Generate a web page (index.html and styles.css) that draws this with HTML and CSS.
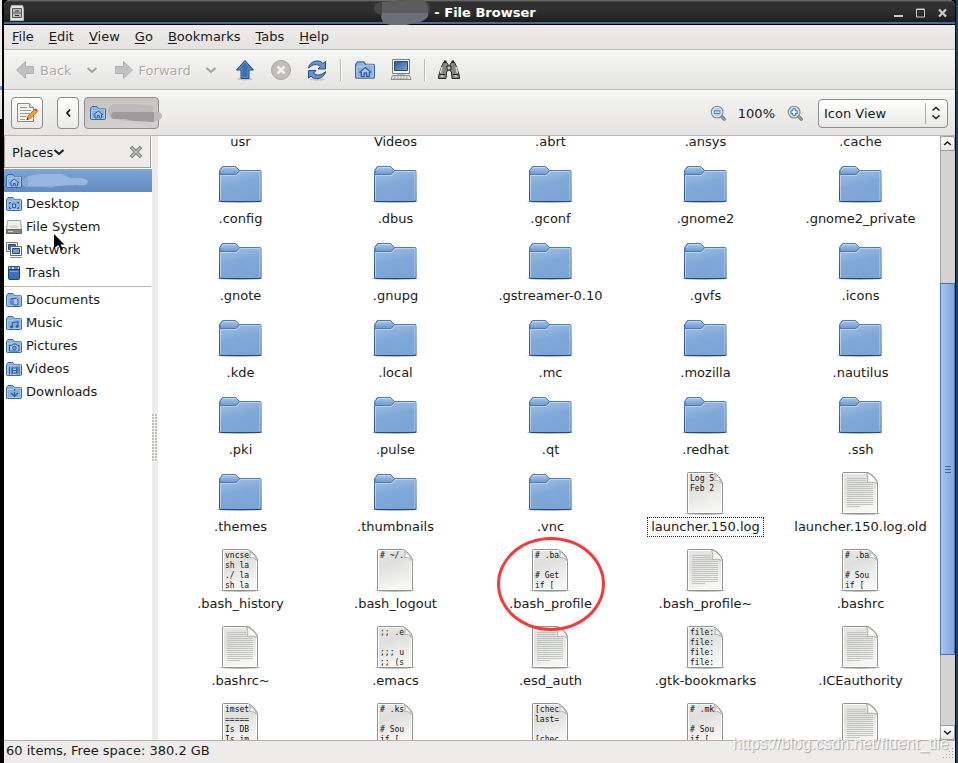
FILE: index.html
```html
<!DOCTYPE html>
<html lang="en">
<head>
    <meta charset="UTF-8">
    <meta name="viewport" content="width=device-width, initial-scale=1.0">
    <title>File Browser</title>
    <link rel="stylesheet" href="styles.css">
</head>
<body>
<!-- shared icons -->
<svg class="defs" width="0" height="0" aria-hidden="true">
    <defs>
        <linearGradient id="gFolder" x1="0" y1="0" x2="0.3" y2="1">
            <stop offset="0" stop-color="#a9c5e6"/>
            <stop offset="0.6" stop-color="#80a9d8"/>
            <stop offset="1" stop-color="#7ba5d5"/>
        </linearGradient>
        <linearGradient id="gTab" x1="0" y1="0" x2="0" y2="1">
            <stop offset="0" stop-color="#acc8ea"/>
            <stop offset="1" stop-color="#6a98ce"/>
        </linearGradient>
        <linearGradient id="gEdge" x1="0" y1="0" x2="0" y2="1">
            <stop offset="0" stop-color="#5583be"/>
            <stop offset="1" stop-color="#204a87"/>
        </linearGradient>
        <linearGradient id="gPaper" x1="0" y1="0" x2="0.3" y2="1">
            <stop offset="0" stop-color="#e8e9e6"/>
            <stop offset="0.4" stop-color="#dfe0dd"/>
            <stop offset="1" stop-color="#f6f6f5"/>
        </linearGradient>
        <linearGradient id="gBlue" x1="0" y1="0" x2="1" y2="1">
            <stop offset="0" stop-color="#2c5a9c"/>
            <stop offset="1" stop-color="#7ba5d8"/>
        </linearGradient>
    </defs>
    <symbol id="folder" viewBox="0 0 48 48">
        <ellipse cx="24" cy="40.500" rx="23" ry="1.500" fill="#000" opacity=".3"/>
        <path d="M3.500 39.500V9.500l3-4h13l3.500 4h21a1 1 0 0 1 1 1v29a1 1 0 0 1-1 1h-39.500a1 1 0 0 1-1-1z" fill="url(#gFolder)" stroke="url(#gEdge)"/>
        <path d="M4 13.500V9.500l3-4h12.500l4 4-3.500 4z" fill="url(#gTab)" stroke="#4c7ab6"/>
        <path d="M4.500 39V14.500h16.500l3.500-4h19.500V39" fill="none" stroke="#c3d8f0" opacity=".8"/>
        <path d="M5 9.500l2.500-3h11.500" fill="none" stroke="#d0e1f5" opacity=".7"/>
    </symbol>
    <symbol id="paper" viewBox="0 0 48 48">
        <ellipse cx="24" cy="44.500" rx="20" ry="1.500" fill="#000" opacity=".28"/>
        <path d="M6.500 43.500v-39a1 1 0 0 1 1-1H31c3.500 0 10.500 7 10.500 11v29a1 1 0 0 1-1 1h-33a1 1 0 0 1-1-1z" fill="url(#gPaper)" stroke="#91938e"/>
        <path d="M7.500 43.500v-39H31c3 0 9.500 7 9.500 10.500v28.500z" fill="none" stroke="#fff"/>
    </symbol>
    <symbol id="curl" viewBox="0 0 48 48">
        <path d="M33.500 5.500c1 1.500 1 3.500 0 6 3-.5 5.500.5 7 3-.5-3.500-3.500-7-7-9z" fill="#fbfbfb" stroke="#a2a49f" stroke-width=".8"/>
    </symbol>
    <symbol id="text-file" viewBox="0 0 48 48">
        <use href="#paper"/>
        <path d="M11 9.500h19M11 11.500h19M11 13.500h20M11 15.500h26M11 17.500h26M11 19.500h26M11 21.500h26M11 23.500h26M11 25.500h26M11 27.500h26M11 29.500h26M11 31.500h26M11 33.500h26M11 35.500h26M11 37.500h13" stroke="#c3c5c1"/>
        <path d="M30.500 4c1.500 3 1.500 6 1 9.500 4-.5 8-.5 10 2C41 11 35.500 5 30.500 4z" fill="#f9f9f8" stroke="#9b9d98" stroke-width=".8"/>
    </symbol>
    <symbol id="folder-small" viewBox="0 0 16 16">
        <path d="M.5 14V3.500l1.500-2h5l1.500 2h6a1 1 0 0 1 1 1V14a1 1 0 0 1-1 .5h-13a1 1 0 0 1-1-.5z" fill="#8fb4df" stroke="#386aa9"/>
        <path d="M1.500 13.500v-8H7l2-1.500h5.500v9.500z" fill="#8db1dd" stroke="#b9d1ed" stroke-width=".7"/>
    </symbol>
    <symbol id="home" viewBox="0 0 16 16">
        <use href="#folder-small"/>
        <path d="M3.500 10 8.200 6l4.800 4M5 9.500v3.500h2.300v-2.500h2V13h2.200V9.500" fill="#a9c6e8" stroke="#2b5ea0"/>
    </symbol>
    <symbol id="chevron" viewBox="0 0 12 12">
        <path d="M1.500 4L6 8l4.500-4" fill="none" stroke="currentColor" stroke-width="2"/>
    </symbol>
    <symbol id="lens" viewBox="0 0 18 18">
        <path d="M12 12l4 4" stroke="#6b6d69" stroke-width="3.500" stroke-linecap="round"/>
        <path d="M12 12l4 4" stroke="#a9aba7" stroke-width="1.500" stroke-linecap="round"/>
        <circle cx="8" cy="8" r="6.500" fill="#b5d0f1" stroke="#8b8d89" stroke-width="1.500"/>
        <circle cx="8" cy="8" r="5.300" fill="none" stroke="#e8f1fb"/>
    </symbol>
</svg>

<div class="window">
    <header class="titlebar">
        <svg class="app-icon" width="14" height="16" viewBox="0 0 14 16" aria-hidden="true">
            <path d="M1.500.5h11l1 3v12H.5v-12z" fill="#e4e4e1" stroke="#b3b5b0"/>
            <path d="M2.500 3.500h9v9h-9zM2.500 8h9" fill="#b9bbb6" stroke="#555753"/>
            <path d="M5 6h4M5 10.500h4" stroke="#2e3436"/>
        </svg>
        <h1>
            <svg class="smudge" width="56" height="25" viewBox="0 0 56 25" aria-hidden="true">
                <path d="M0 8Q0 2 8 2l24-2h16q8 2 8 8t-4 7H10Q0 14 0 8z" fill="#454546"/>
                <path d="M8 2l24-2h18q5 4 4 14H8z" fill="#5c5c5d"/>
                <path d="M8 13h46q1 5-4 7-4 3-11 3-6 3-14 2-12 1-16-3-3-4-1-9z" fill="#6b6e76"/>
            </svg>
            <span>- File Browser</span>
        </h1>
        <div class="window-controls">
            <button type="button" aria-label="Minimize"><svg width="9" height="11"><path d="M0 9h9" stroke="#ccc" stroke-width="2"/></svg></button>
            <button type="button" aria-label="Maximize"><svg width="9" height="11"><path d="M.5 2h8v8h-8zM0 2.500h9" fill="none" stroke="#ccc"/></svg></button>
            <button type="button" aria-label="Close"><svg width="9" height="11"><path d="M1 2.500l7 7m0-7l-7 7" stroke="#ccc" stroke-width="2.300"/></svg></button>
        </div>
    </header>

    <nav class="menubar">
        <a href="#"><u>F</u>ile</a>
        <a href="#"><u>E</u>dit</a>
        <a href="#"><u>V</u>iew</a>
        <a href="#"><u>G</u>o</a>
        <a href="#"><u>B</u>ookmarks</a>
        <a href="#"><u>T</u>abs</a>
        <a href="#"><u>H</u>elp</a>
    </nav>

    <div class="toolbar">
        <button type="button" class="nav" disabled>
            <svg width="20" height="20" viewBox="0 0 20 20"><path d="M10.500 1.500v5h8v7h-8v5L1.500 10z" fill="#bfc1c2" stroke="#b0b2b3"/></svg>
            Back
        </button>
        <button type="button" class="drop" disabled aria-label="Back history"><svg width="12" height="12"><use href="#chevron"/></svg></button>
        <button type="button" class="nav" disabled>
            <svg width="20" height="20" viewBox="0 0 20 20"><path d="M9.500 1.500v5h-8v7h8v5l9-8.500z" fill="#bfc1c2" stroke="#b0b2b3"/></svg>
            Forward
        </button>
        <button type="button" class="drop" disabled aria-label="Forward history"><svg width="12" height="12"><use href="#chevron"/></svg></button>
        <button type="button" class="tool" aria-label="Up">
            <svg width="22" height="22" viewBox="0 0 22 22"><ellipse cx="11" cy="20" rx="8" ry="1.500" opacity=".15"/><path d="M11 1.500l8.500 9.500H15v8.500H7V11H2.500z" fill="#3b70b4" stroke="#204a87"/><path d="M11 3l6.300 7H14v8.500H8V10H4.700z" fill="none" stroke="#6d97cc" stroke-width=".8"/></svg>
        </button>
        <button type="button" class="tool" disabled aria-label="Stop">
            <svg width="22" height="22" viewBox="0 0 22 22"><circle cx="11" cy="11" r="9.500" fill="#c3bcbc" stroke="#a9a3a3"/><path d="M7.500 7.500l7 7m0-7l-7 7" stroke="#f5f3f3" stroke-width="2.500"/></svg>
        </button>
        <button type="button" class="tool" aria-label="Reload">
            <svg width="22" height="22" viewBox="0 0 22 22">
                <ellipse cx="11" cy="20.500" rx="8" ry="1.200" opacity=".15"/>
                <path id="arc" d="M2.500 9C3 5 7 1.800 11.500 2c2.500 0 4.500 1 5.500 2.500L19.500 2.500V10H12l2.500-2.500C11 4.500 7 5 2.500 9z" fill="#6795cf" stroke="#204a87"/>
                <use href="#arc" transform="rotate(180 11 10.800)"/>
            </svg>
        </button>
        <span class="separator"></span>
        <button type="button" class="tool" aria-label="Home"><svg width="20" height="20"><use href="#home"/></svg></button>
        <button type="button" class="tool" aria-label="Computer">
            <svg width="22" height="22" viewBox="0 0 22 22">
                <path d="M2.500.5h17v14h-17z" fill="#f6f6f5" stroke="#7b7d79"/>
                <path d="M4.500 2.500h13v9h-13z" fill="url(#gBlue)" stroke="#204a87"/>
                <path d="M7 15h8v2H7z" fill="#babdb6"/>
                <path d="M2.500 16.500h17l1.500 4H1z" fill="#e6e6e3" stroke="#888a85"/>
                <path d="M4 18h14M3.500 19.500h15" stroke="#aaaca8" stroke-dasharray="2 1"/>
            </svg>
        </button>
        <span class="separator"></span>
        <button type="button" class="tool" aria-label="Search">
            <svg width="22" height="20" viewBox="0 0 22 20">
                <path id="barrel" d="M5.500 2.500h3l1.500 2v6l-1.500 1.500-.5 6.500H.500l.5-4 3-9z" fill="#858780" stroke="#20231f"/>
                <use href="#barrel" transform="matrix(-1 0 0 1 22 0)"/>
                <path d="M9 6h4v4H9z" fill="#c2c4bf" stroke="#20231f"/>
                <path d="M1.500 14.500H7M15 14.500h5.500" stroke="#20231f"/>
                <path d="M4 7l-1.500 6M18 7l1.500 6M3 16h2.500M16.500 16H19" stroke="#d9dbd6" stroke-width="1.500"/>
                <path d="M6 1.500h2.500M13.500 1.500H16" stroke="#20231f" stroke-width="2"/>
            </svg>
        </button>
    </div>

    <div class="location">
        <button type="button" class="raised edit" aria-label="Edit location">
            <svg width="22" height="22" viewBox="0 0 22 22">
                <path d="M1.500 1.500h12l4 4v14h-16z" fill="#f4f4f2" stroke="#888a85"/>
                <path d="M13.500 1.500v4h4" fill="#ddd" stroke="#888a85"/>
                <path d="M4 5.500h7M4 8.500h11M4 11.500h10M4 14.500h6M4 17.500h5" stroke="#9a9c97"/>
                <path d="M11 17.500l1-3.500 7-7 2.500 2.500-7 7z" fill="#f8a01c" stroke="#b35a00" stroke-width=".7"/>
                <path d="M18.500 7.500l1.300-1.200 2 2-1.300 1.200z" fill="#e33b3b"/>
                <path d="M10.500 18l.7-2.200 1.500 1.500z" fill="#222"/>
            </svg>
        </button>
        <button type="button" class="raised prev" aria-label="Previous folder">
            <svg width="8" height="10" viewBox="0 0 8 10"><path d="M6 1.500L3 5l3 3.500" fill="none" stroke="#111" stroke-width="1.700"/></svg>
        </button>
        <button type="button" class="raised path" aria-label="Home folder">
            <svg width="16" height="16"><use href="#home"/></svg>
            <svg class="smudge" width="54" height="20" viewBox="0 0 54 20" aria-hidden="true">
                <path d="M0 9Q0 1 8 1h20l17 2v6q9-1 9 4 0 5-9 5l-25 0-13-2Q0 15 0 9z" fill="#bcbaba"/>
                <path d="M5 9h41v10l-20-1-9-2H5q-4-3 0-7z" fill="#9c9a9a"/>
            </svg>
        </button>
        <div class="zoom">
            <button type="button" aria-label="Zoom out"><svg width="16" height="16" viewBox="0 0 18 18"><use href="#lens"/><path d="M4.500 8h7" stroke="#2d62a8" stroke-width="3.500"/><path d="M5 8h6" stroke="#fff" stroke-width="1.500"/></svg></button>
            <span>100%</span>
            <button type="button" aria-label="Zoom in"><svg width="16" height="16" viewBox="0 0 18 18"><use href="#lens"/><path d="M4 8h8M8 4v8" stroke="#2d62a8" stroke-width="3.500"/><path d="M5 8h6M8 5v6" stroke="#fff" stroke-width="2"/></svg></button>
        </div>
        <div class="view-mode">
            <select aria-label="View mode">
                <option>Icon View</option>
            </select>
            <svg width="10" height="14" viewBox="0 0 10 14" aria-hidden="true"><path d="M1.500 4.500L5 1.500l3.500 3M1.500 9.500l3.500 3 3.500-3" fill="none" stroke="#222" stroke-width="1.600"/></svg>
        </div>
    </div>

    <div class="content">
        <aside class="sidebar">
            <div class="sidebar-head">
                <button type="button">Places<svg width="12" height="12"><use href="#chevron"/></svg></button>
                <button type="button" aria-label="Close sidebar"><svg width="14" height="14" viewBox="0 0 14 14"><path d="M2 2l10 10M12 2L2 12" stroke="#777975" stroke-width="3.500"/><path d="M2.500 2.500l9 9M11.500 2.500l-9 9" stroke="#bfc0bd" stroke-width="1.500"/></svg></button>
            </div>
            <ul class="places">
                <li class="selected"><a href="#" aria-label="Home">
                    <svg width="16" height="16"><use href="#home"/></svg>
                    <svg class="smudge" width="68" height="18" viewBox="0 0 68 18" aria-hidden="true">
                        <path d="M0 11q0-5 6-6l12-3h20v10l-8 4-8-1H6q-6 0-6-4z" fill="#86a8d8"/>
                        <path d="M6 4l12-2h22l8 4q18-1 18 4 0 4-12 3l-20 1H6z" fill="#98b6dc"/>
                    </svg>
                </a></li>
                <li><a href="#"><svg width="16" height="16" viewBox="0 0 16 16"><use href="#folder-small"/><path d="M3.500 8V6.500H5M11 6.500h1.500V8M12.500 11v1.500H11M5 12.500H3.500V11" fill="none" stroke="#2b5ea0"/><path d="M6.500 8h3v3.500h-3z" fill="#a9c6e8" stroke="#2b5ea0"/></svg>Desktop</a></li>
                <li class="hovered"><a href="#"><svg width="16" height="16" viewBox="0 0 16 16"><path d="M1.500 1.500h13l1 9v4H.5v-4z" fill="#eeeeec" stroke="#a0a29e"/><path d="M.5 10.500h15v4H.5z" fill="#85877f" stroke="#666863"/><path d="M2 12.500h5" stroke="#d3d7cf"/><ellipse cx="8" cy="7.500" rx="4.500" ry="1.500" fill="#d6d8d4"/></svg>File System</a>
                    <svg class="pointer" width="11" height="17" viewBox="0 0 11 17" aria-hidden="true"><path d="M0 0l10.500 10.500H6.500l2.500 5-2 1-2.500-5.500L0 14z" fill="#000"/></svg>
                </li>
                <li><a href="#"><svg width="16" height="16" viewBox="0 0 16 16"><path d="M.5.500h11v9H.5z" fill="#f4f4f3" stroke="#777975"/><path d="M2.500 2.500h7v5h-7z" fill="#3b6fb3" stroke="#204a87"/><path d="M4.500 4.500h11v9h-11z" fill="#f4f4f3" stroke="#666863"/><path d="M6.500 6.500h7v5h-7z" fill="#6f9cd3" stroke="#204a87"/><path d="M4 15.500h12" stroke="#8d8f8a"/></svg>Network</a></li>
                <li><a href="#"><svg width="16" height="16" viewBox="0 0 16 16"><path d="M2.500 5V1.500h11V5z" fill="#cfd2d6" stroke="#234f8d"/><path d="M5 2v3M9 1.500V4M11 2v3" stroke="#345" stroke-width="1.200"/><path d="M2.500 4.500h11v9a1 1 0 0 1-1 1h-9a1 1 0 0 1-1-1z" fill="#3a70b8" stroke="#183f7a"/><path d="M3.500 6.500h9" stroke="#7da7dc"/></svg>Trash</a></li>
            </ul>
            <ul class="places bookmarks">
                <li><a href="#"><svg width="16" height="16" viewBox="0 0 16 16"><use href="#folder-small"/><path d="M5 12.500v-6h3.500M7 6.500h3.500l1.500 1.500v5H7z" fill="#a9c6e8" stroke="#2b5ea0"/></svg>Documents</a></li>
                <li><a href="#"><svg width="16" height="16" viewBox="0 0 16 16"><use href="#folder-small"/><path d="M6.500 12V7.500l5.500-.5v4.500" fill="none" stroke="#2b5ea0" stroke-width="1.200"/><circle cx="5.500" cy="12" r="1.400" fill="#2b5ea0"/><circle cx="11" cy="11.500" r="1.400" fill="#2b5ea0"/></svg>Music</a></li>
                <li><a href="#"><svg width="16" height="16" viewBox="0 0 16 16"><use href="#folder-small"/><path d="M3.500 7.500H6l1-1.500h3l1 1.500h2v5.500H3.500z" fill="#a9c6e8" stroke="#2b5ea0"/><circle cx="8.500" cy="10" r="1.800" fill="#7fa7d8" stroke="#2b5ea0"/></svg>Pictures</a></li>
                <li><a href="#"><svg width="16" height="16" viewBox="0 0 16 16"><use href="#folder-small"/><path d="M3.500 5.500v8M13 5.500v8M6.500 7h4v5h-4zM6 5.500v8M11 5.500v8" fill="#a9c6e8" stroke="#2b5ea0"/><path d="M7 9.500h3" stroke="#2b5ea0"/></svg>Videos</a></li>
                <li><a href="#"><svg width="16" height="16" viewBox="0 0 16 16"><use href="#folder-small"/><path d="M8.500 5v2M8.500 8v4M5 9l3.500 3.500L12 9" fill="none" stroke="#2b5ea0" stroke-width="1.200"/></svg>Downloads</a></li>
            </ul>
        </aside>
        <div class="handle"><span></span></div>

        <main class="files">
            <ul class="grid">
                <li><svg class="icon"><use href="#folder"/></svg><a href="#">usr</a></li>
                <li><svg class="icon"><use href="#folder"/></svg><a href="#">Videos</a></li>
                <li><svg class="icon"><use href="#folder"/></svg><a href="#">.abrt</a></li>
                <li><svg class="icon"><use href="#folder"/></svg><a href="#">.ansys</a></li>
                <li><svg class="icon"><use href="#folder"/></svg><a href="#">.cache</a></li>

                <li><svg class="icon"><use href="#folder"/></svg><a href="#">.config</a></li>
                <li><svg class="icon"><use href="#folder"/></svg><a href="#">.dbus</a></li>
                <li><svg class="icon"><use href="#folder"/></svg><a href="#">.gconf</a></li>
                <li><svg class="icon"><use href="#folder"/></svg><a href="#">.gnome2</a></li>
                <li><svg class="icon"><use href="#folder"/></svg><a href="#">.gnome2_private</a></li>

                <li><svg class="icon"><use href="#folder"/></svg><a href="#">.gnote</a></li>
                <li><svg class="icon"><use href="#folder"/></svg><a href="#">.gnupg</a></li>
                <li><svg class="icon"><use href="#folder"/></svg><a href="#">.gstreamer-0.10</a></li>
                <li><svg class="icon"><use href="#folder"/></svg><a href="#">.gvfs</a></li>
                <li><svg class="icon"><use href="#folder"/></svg><a href="#">.icons</a></li>

                <li><svg class="icon"><use href="#folder"/></svg><a href="#">.kde</a></li>
                <li><svg class="icon"><use href="#folder"/></svg><a href="#">.local</a></li>
                <li><svg class="icon"><use href="#folder"/></svg><a href="#">.mc</a></li>
                <li><svg class="icon"><use href="#folder"/></svg><a href="#">.mozilla</a></li>
                <li><svg class="icon"><use href="#folder"/></svg><a href="#">.nautilus</a></li>

                <li><svg class="icon"><use href="#folder"/></svg><a href="#">.pki</a></li>
                <li><svg class="icon"><use href="#folder"/></svg><a href="#">.pulse</a></li>
                <li><svg class="icon"><use href="#folder"/></svg><a href="#">.qt</a></li>
                <li><svg class="icon"><use href="#folder"/></svg><a href="#">.redhat</a></li>
                <li><svg class="icon"><use href="#folder"/></svg><a href="#">.ssh</a></li>

                <li><svg class="icon"><use href="#folder"/></svg><a href="#">.themes</a></li>
                <li><svg class="icon"><use href="#folder"/></svg><a href="#">.thumbnails</a></li>
                <li><svg class="icon"><use href="#folder"/></svg><a href="#">.vnc</a></li>
                <li class="focused"><div class="preview"><svg class="icon"><use href="#paper"/><use href="#curl"/></svg><pre>Log S
Feb 2</pre></div><a href="#">launcher.150.log</a></li>
                <li><svg class="icon"><use href="#text-file"/></svg><a href="#">launcher.150.log.old</a></li>

                <li><div class="preview"><svg class="icon"><use href="#paper"/><use href="#curl"/></svg><pre>vncse
sh la
./ la
sh la</pre></div><a href="#">.bash_history</a></li>
                <li><div class="preview"><svg class="icon"><use href="#paper"/><use href="#curl"/></svg><pre># ~/.</pre></div><a href="#">.bash_logout</a></li>
                <li class="circled"><div class="preview"><svg class="icon"><use href="#paper"/><use href="#curl"/></svg><pre># .ba

# Get
if [</pre></div><a href="#">.bash_profile</a></li>
                <li><svg class="icon"><use href="#text-file"/></svg><a href="#">.bash_profile~</a></li>
                <li><div class="preview"><svg class="icon"><use href="#paper"/><use href="#curl"/></svg><pre># .ba

# Sou
if [</pre></div><a href="#">.bashrc</a></li>

                <li><svg class="icon"><use href="#text-file"/></svg><a href="#">.bashrc~</a></li>
                <li><div class="preview"><svg class="icon"><use href="#paper"/><use href="#curl"/></svg><pre>;; .e

;;; u
;; (s</pre></div><a href="#">.emacs</a></li>
                <li><svg class="icon"><use href="#text-file"/></svg><a href="#">.esd_auth</a></li>
                <li><div class="preview"><svg class="icon"><use href="#paper"/><use href="#curl"/></svg><pre>file:
file:
file:
file:</pre></div><a href="#">.gtk-bookmarks</a></li>
                <li><svg class="icon"><use href="#text-file"/></svg><a href="#">.ICEauthority</a></li>

                <li><div class="preview"><svg class="icon"><use href="#paper"/><use href="#curl"/></svg><pre>imset
=====
Is DB
Is im</pre></div></li>
                <li><div class="preview"><svg class="icon"><use href="#paper"/><use href="#curl"/></svg><pre># .ks

# Sou
if [</pre></div></li>
                <li><div class="preview"><svg class="icon"><use href="#paper"/><use href="#curl"/></svg><pre>[chec
last=

[chec</pre></div></li>
                <li><div class="preview"><svg class="icon"><use href="#paper"/><use href="#curl"/></svg><pre># .mk

# Sou
if [</pre></div></li>
                <li><svg class="icon"><use href="#text-file"/></svg></li>
            </ul>
        </main>

        <div class="scrollbar">
            <button type="button" class="step up" aria-label="Scroll up"><svg width="9" height="9"><use href="#chevron"/></svg></button>
            <div class="before"></div>
            <div class="thumb"><svg width="6" height="8"><path d="M0 1.500h6M0 4.500h6M0 7.500h6" stroke="#3c6ca8"/></svg></div>
            <div class="after"></div>
            <button type="button" class="step" aria-label="Scroll down"><svg width="9" height="9"><use href="#chevron"/></svg></button>
        </div>
    </div>

    <footer class="statusbar">
        <span>60 items, Free space: 380.2 GB</span>
        <svg class="grip" width="12" height="12" viewBox="0 0 12 12" aria-hidden="true"><path d="M9.500 1v11M6.500 4v8M3.500 7v5M.5 10v2" stroke="#a5a3a0" stroke-dasharray="1 2"/></svg>
    </footer>
    <div class="watermark">https://blog.csdn.net/fluent_tile</div>
</div>
</body>
</html>
```
FILE: styles.css
```css
*, *::after {
    box-sizing: border-box;
}
body {
    margin: 0;
    height: 100vh;
    padding: 0 3px 0 4px;
    background: linear-gradient(to right, #000 1px, #1d4468 1px) right / 3px 100% no-repeat,
        linear-gradient(to bottom, #eee 86px, #6d9be0 86px, #6d9be0 90px, #eee 90px, #ddd 119px, #000 119px) left / 2px 100% no-repeat,
        #000;
    font-family: "DejaVu Sans", sans-serif;
    font-size: 13px;
    color: #1a1a1a;
}
ul {
    list-style: none;
    margin: 0;
    padding: 0;
}
a {
    color: inherit;
    text-decoration: none;
}
button, select {
    font: inherit;
    color: inherit;
    background: none;
    border: none;
    margin: 0;
    padding: 0;
}
svg {
    display: block;
    flex: none;
}
.defs {
    position: absolute;
}
.window {
    position: relative;
    height: 100%;
    display: flex;
    flex-direction: column;
    background: #edeceb;
    border-radius: 6px 6px 0 0;
}

/* title bar */
.titlebar {
    display: flex;
    align-items: center;
    height: 25px;
    padding: 0 8px 0 6px;
    background: linear-gradient(#777 0, #555 1px, #303030 2px, #2e2e2e 12px, #1c1c1c 22px, #4d6a94 22px, #4d6a94 24px, #000 24px);
    border-radius: 6px 6px 0 0;
    color: #fff;
}
.titlebar h1 {
    flex: 1;
    display: flex;
    justify-content: center;
    align-items: center;
    gap: 4px;
    margin: 0;
    padding-right: 8px;
    font-size: 13px;
    font-weight: bold;
}
.window-controls {
    display: flex;
    gap: 13px;
}

/* menu and tool bars */
.menubar {
    display: flex;
    align-items: center;
    gap: 15px;
    height: 25px;
    padding: 0 8px 2px;
    background: linear-gradient(#edeceb, #e4e3e1);
    border-bottom: 1px solid #b9b7b4;
}
.menubar u {
    text-underline-offset: 2px;
}
.toolbar {
    display: flex;
    align-items: center;
    height: 40px;
    padding: 0 11px;
    background: linear-gradient(#f5f5f4, #e5e4e2);
    border-top: 1px solid #fff;
    border-bottom: 1px solid #b9b7b4;
}
.toolbar .nav {
    display: flex;
    align-items: center;
    gap: 5px;
    color: #acaaa8;
    text-shadow: 1px 1px 0 #fff;
}
.toolbar .drop {
    width: 36px;
    padding-left: 14px;
    color: #a3a19f;
}
.toolbar .drop + .nav {
    margin-left: 6px;
}
.toolbar .tool {
    display: flex;
    justify-content: center;
    width: 36px;
}
.toolbar .separator {
    width: 2px;
    height: 22px;
    margin: 0 5px;
    background: #bcbab7;
    border-right: 1px solid #fff;
}
.location {
    display: flex;
    align-items: center;
    height: 46px;
    padding: 0 7px;
    background: linear-gradient(#f5f5f4, #e5e4e2);
    border-top: 1px solid #fff;
    border-bottom: 1px solid #b9b7b4;
}
.raised {
    display: flex;
    align-items: center;
    justify-content: center;
    height: 32px;
    border: 1px solid #8f8d8a;
    border-radius: 4px;
    background: linear-gradient(#fff, #f4f4f3 50%, #e9e8e7);
}
.edit {
    width: 32px;
    margin-right: 14px;
}
.prev {
    width: 22px;
    margin-right: 5px;
}
.path {
    width: 75px;
    justify-content: flex-start;
    gap: 2px;
    padding-left: 5px;
    background: linear-gradient(#c6c3c1, #d3d1cf);
}
.zoom {
    display: flex;
    align-items: center;
    gap: 12px;
    margin-left: auto;
    margin-right: 15px;
}
.view-mode {
    display: grid;
    align-items: center;
}
.view-mode select {
    grid-area: 1 / 1;
    appearance: none;
    width: 130px;
    height: 29px;
    padding: 0 5px;
    border: 1px solid #8f8d8a;
    border-radius: 4px;
    background: linear-gradient(#b0aeab, #b0aeab) 106px 3px / 1px 21px no-repeat,
        linear-gradient(#fff, #f4f4f3 50%, #e9e8e7);
}
.view-mode svg {
    grid-area: 1 / 1;
    justify-self: end;
    margin-right: 7px;
    pointer-events: none;
}

/* side pane */
.content {
    flex: 1;
    min-height: 0;
    display: flex;
    background: #fff;
}
.sidebar {
    width: 148px;
}
.sidebar-head {
    display: flex;
    align-items: center;
    justify-content: space-between;
    height: 32px;
    margin: 0 1px 1px 0;
    padding: 0 7px;
    border: 1px solid #9f9d9a;
    border-top-color: #edeceb;
    background: #edeceb;
}
.sidebar-head button {
    display: flex;
    align-items: center;
}
.places li {
    position: relative;
    height: 23px;
    padding-left: 2px;
}
.places a {
    display: flex;
    align-items: center;
    gap: 4px;
    height: 100%;
}
.places .selected {
    background: linear-gradient(#7ea4d8, #628cc1);
}
.places .selected a {
    gap: 0;
}
.bookmarks {
    margin: 2px 1px 0 0;
    padding-top: 1px;
    border-top: 1px solid #b9b9b6;
}
.pointer {
    position: absolute;
    left: 50px;
    top: 19px;
    z-index: 1;
}
.handle {
    width: 6px;
    display: flex;
    align-items: center;
    background: #edeceb;
}
.handle span {
    width: 6px;
    height: 48px;
    background: radial-gradient(circle at 1px 1px, #c0beba 1px, #f7f7f6 1px) 0 0 / 3px 3px;
}

/* icon view */
.files {
    flex: 1;
    min-width: 0;
    overflow: hidden;
}
.grid {
    display: grid;
    grid-template-columns: repeat(5, 1fr);
    grid-auto-rows: 77px;
    /* scrolled part of the first row */
    margin-top: -52px;
    padding: 0 2px 0 5px;
}
.grid li {
    position: relative;
    display: flex;
    flex-direction: column;
    align-items: center;
}
.grid a {
    height: 20px;
    padding: 0 3px;
    border: 1px solid transparent;
    line-height: 18px;
    white-space: nowrap;
}
.grid .focused a {
    border: 1px dotted #222;
}
.icon {
    width: 48px;
    height: 48px;
    margin-right: 1px;
}
.preview {
    display: grid;
    height: 48px;
}
.preview .icon, .preview pre {
    grid-area: 1 / 1;
}
.preview pre {
    height: 38px;
    margin: 5px 0 0 9px;
    overflow: hidden;
    font: 8px/10px "DejaVu Sans Mono", monospace;
    color: #111;
}
.circled::after {
    content: "";
    position: absolute;
    top: -9px;
    left: 50%;
    width: 108px;
    height: 94px;
    margin-left: -54px;
    border: 3px solid #fa3838;
    border-radius: 50%;
    z-index: 1;
}

/* scroll bar */
.scrollbar {
    width: 15px;
    display: flex;
    flex-direction: column;
    background: #d5d3d1;
    border-left: 1px solid #a5a3a0;
}
.scrollbar .step {
    display: flex;
    align-items: center;
    justify-content: center;
    height: 15px;
    border: 1px solid #9f9d9a;
    border-left: none;
    border-radius: 0 0 3px 3px;
    background: linear-gradient(#fff, #e9e8e7);
}
.scrollbar .up {
    border-radius: 3px 3px 0 0;
}
.scrollbar .up svg {
    transform: rotate(180deg);
}
.scrollbar .before {
    flex: 133;
}
.scrollbar .thumb {
    flex: 372;
    display: flex;
    align-items: center;
    justify-content: center;
    margin-left: -1px;
    border: 1px solid #4a76ae;
    background: linear-gradient(to right, #a9c6ec, #80a7db);
}
.scrollbar .after {
    flex: 70;
}

/* status bar */
.statusbar {
    display: flex;
    justify-content: space-between;
    align-items: center;
    height: 23px;
    padding: 0 0 4px 2px;
    border-top: 1px solid #b3b1ae;
}
.grip {
    align-self: flex-end;
}
.watermark {
    position: absolute;
    right: 6px;
    bottom: 9px;
    font: 16px/20px "Liberation Sans", sans-serif;
    color: rgba(255, 255, 255, 0.8);
    text-shadow: 1px 1px 1px rgba(0, 0, 0, 0.3);
}
```
